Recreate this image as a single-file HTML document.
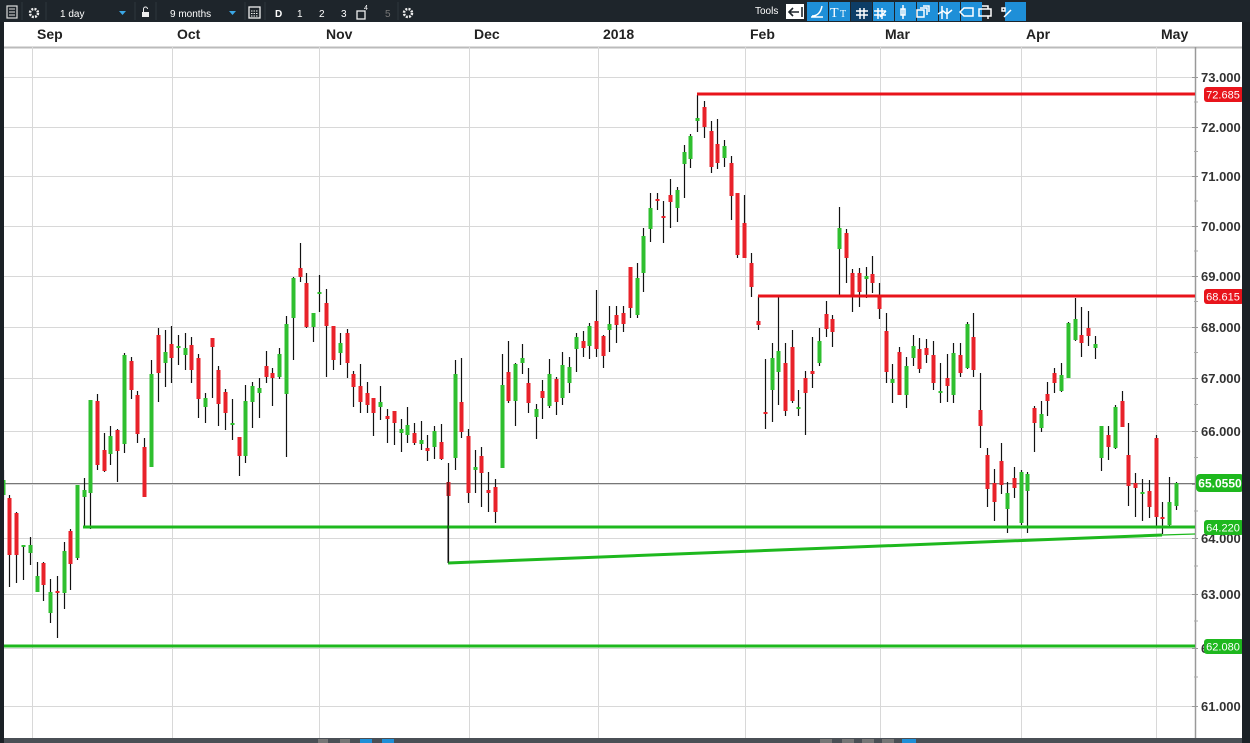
<!DOCTYPE html>
<html><head><meta charset="utf-8"><style>
html,body{margin:0;padding:0;background:#1b2126;overflow:hidden}
svg{display:block;font-family:"Liberation Sans",sans-serif}
</style></head><body>
<svg id="s" width="1250" height="743" viewBox="0 0 1250 743" xmlns="http://www.w3.org/2000/svg">
<rect width="1250" height="743" fill="#1b2126"/>
<rect x="4" y="22" width="1238" height="716" fill="#fff"/>
<rect x="4" y="22" width="1238" height="25" fill="#fff"/>
<line x1="4" y1="47.5" x2="1242" y2="47.5" stroke="#bbb" stroke-width="2"/>
<g fill="#222" font-size="14" font-weight="bold">
<text x="37" y="39">Sep</text><text x="177" y="39">Oct</text><text x="326" y="39">Nov</text>
<text x="474" y="39">Dec</text><text x="603" y="39">2018</text><text x="750" y="39">Feb</text>
<text x="885" y="39">Mar</text><text x="1026" y="39">Apr</text><text x="1161" y="39">May</text>
</g>
<g id="grid" stroke="#d8d8d8" stroke-width="1"></g>
<line x1="1195.5" y1="47" x2="1195.5" y2="738" stroke="#999" stroke-width="1.5"/>
<g id="ax" fill="#333" font-size="13" font-weight="bold"></g>
<line x1="4" y1="483.5" x2="1195" y2="483.5" stroke="#777" stroke-width="1"/>
<g id="c"></g>
<line x1="697" y1="94" x2="1195" y2="94" stroke="#e8141b" stroke-width="3"/>
<line x1="758" y1="296" x2="1195" y2="296" stroke="#e8141b" stroke-width="3"/>
<line x1="83" y1="527" x2="1195" y2="527" stroke="#1eb81e" stroke-width="3"/>
<line x1="4" y1="646" x2="1195" y2="646" stroke="#1eb81e" stroke-width="3"/>
<line x1="448" y1="563" x2="1162" y2="535" stroke="#1eb81e" stroke-width="3"/>
<line x1="1162" y1="535" x2="1195" y2="534" stroke="#1eb81e" stroke-width="1.2"/>
<line x1="448" y1="482" x2="448" y2="563" stroke="#111" stroke-width="1"/>
<g font-size="11" fill="#fff" text-anchor="middle">
<rect x="1204" y="87" width="40" height="15" rx="3" fill="#e8141b"/><text x="1223" y="98.5">72.685</text>
<rect x="1204" y="289" width="40" height="15" rx="3" fill="#e8141b"/><text x="1223" y="300.5">68.615</text>
<rect x="1204" y="520" width="40" height="15" rx="3" fill="#1eb81e"/><text x="1223" y="531.5">64.220</text>
<rect x="1204" y="639" width="40" height="15" rx="3" fill="#1eb81e"/><text x="1223" y="650.5">62.080</text>
<rect x="1196" y="474" width="48" height="18" rx="4" fill="#1eb81e"/><text x="1220" y="487.5" font-weight="bold" font-size="12">65.0550</text>
</g>
<rect x="0" y="0" width="1250" height="22" fill="#1e252b"/>
<rect x="0" y="738" width="1250" height="5" fill="#4a4f55"/>
<rect x="0" y="22" width="4" height="721" fill="#1b2126"/>
<rect x="1242" y="22" width="8" height="721" fill="#1b2126"/>
<g stroke="#2e363d"><line x1="22" y1="2" x2="22" y2="20"/><line x1="46" y1="2" x2="46" y2="20"/><line x1="135" y1="2" x2="135" y2="20"/><line x1="156" y1="2" x2="156" y2="20"/><line x1="245" y1="2" x2="245" y2="20"/><line x1="265" y1="2" x2="265" y2="20"/><line x1="398" y1="2" x2="398" y2="20"/></g>
<g fill="#fff" font-size="10">
<rect x="7" y="6" width="10" height="12" fill="none" stroke="#ddd" stroke-width="1.2"/>
<path d="M9 9h6M9 12h6M9 15h6" stroke="#ddd"/>
<circle cx="34" cy="13" r="4" fill="none" stroke="#eee" stroke-width="2.5" stroke-dasharray="2 1.2"/>
<text x="60" y="17">1 day</text><path d="M119 11h7l-3.5 4z" fill="#3ba7e6"/>
<rect x="142" y="12" width="7" height="5" fill="#eee"/><path d="M143.5 12v-3a2 2 0 0 1 4 0" stroke="#eee" fill="none"/>
<text x="170" y="17">9 months</text><path d="M229 11h7l-3.5 4z" fill="#3ba7e6"/>
<rect x="249" y="7" width="11" height="11" fill="none" stroke="#eee" stroke-width="1.3"/><path d="M251 11h7M251 13.5h7M251 16h7" stroke="#eee" stroke-dasharray="1.5 1"/>
<text x="275" y="17" font-weight="bold">D</text><text x="297" y="17">1</text><text x="319" y="17">2</text><text x="341" y="17">3</text>
<rect x="357" y="11" width="8" height="8" fill="none" stroke="#eee" stroke-width="1.3"/><text x="364" y="10" font-size="7">4</text>
<text x="385" y="17" fill="#777">5</text>
<circle cx="408" cy="13" r="4" fill="none" stroke="#eee" stroke-width="2.5" stroke-dasharray="2 1.2"/>
<text x="755" y="14">Tools</text>
</g>
<g id="tb"></g>
<g fill="#777"><rect x="318" y="739" width="10" height="4"/><rect x="340" y="739" width="10" height="4"/><rect x="360" y="739" width="12" height="4" fill="#1e8fd8"/><rect x="382" y="739" width="12" height="4" fill="#1e8fd8"/><rect x="820" y="739" width="12" height="4"/><rect x="842" y="739" width="12" height="4"/><rect x="862" y="739" width="12" height="4"/><rect x="882" y="739" width="12" height="4"/><rect x="902" y="739" width="14" height="4" fill="#1e8fd8"/></g>
</svg>
<script>
var NS="http://www.w3.org/2000/svg";
function el(p,t,a){var e=document.createElementNS(NS,t);for(var k in a)e.setAttribute(k,a[k]);p.appendChild(e);return e;}
var g=document.getElementById("grid"),ax=document.getElementById("ax");
[32,172,319,469,598,745,880,1021,1156].forEach(function(x){el(g,"line",{x1:x+.5,y1:47,x2:x+.5,y2:738});});
var P=[[73,77],[72,127],[71,176],[70,226],[69,276],[68,327],[67,378],[66,431],[65,484],[64,538],[63,594],[62,648],[61,706]];
P.forEach(function(p,i){el(g,"line",{x1:4,y1:p[1]+.5,x2:1195,y2:p[1]+.5});
var t=el(ax,"text",{x:1201,y:p[1]+5});t.textContent=p[0].toFixed(3);
el(ax,"line",{x1:1192,y1:p[1]+.5,x2:1198,y2:p[1]+.5,stroke:"#999"});
if(i<P.length-1){var m=(p[1]+P[i+1][1])/2;el(ax,"line",{x1:1194,y1:m,x2:1198,y2:m,stroke:"#aaa"});}});
var D=[[3,480,495,470,500,"g"],[9,498,555,495,587,"r"],[16,513,555,512,583,"r"],[23,545,547,545,580,"g"],[30,545,553,537,565,"g"],[37,576,592,562,592,"g"],[43,563,585,562,601,"r"],[50,592,613,579,623,"g"],[57,591,592,576,638,"r"],[64,551,593,542,609,"g"],[70,531,564,529,590,"r"],[77,485,558,485,560,"g"],[84,490,497,478,526,"g"],[90,400,493,400,529,"g"],[97,401,465,394,470,"r"],[104,450,471,433,472,"r"],[110,436,454,426,465,"g"],[117,430,451,429,482,"r"],[124,355,444,353,453,"g"],[131,361,390,357,399,"r"],[137,395,434,391,443,"r"],[144,447,497,438,497,"r"],[151,374,467,360,467,"g"],[158,335,373,328,402,"r"],[165,352,363,330,387,"g"],[171,344,358,326,383,"r"],[178,346,347,335,365,"g"],[185,348,355,333,370,"g"],[191,345,370,337,383,"r"],[198,358,399,354,418,"r"],[205,398,407,393,423,"g"],[212,338,347,338,398,"r"],[218,370,404,366,426,"r"],[225,392,413,389,430,"r"],[232,423,425,399,440,"g"],[239,437,456,437,476,"r"],[245,401,456,385,463,"g"],[252,386,402,382,428,"g"],[259,388,393,378,418,"g"],[266,366,377,351,383,"r"],[272,373,378,368,406,"r"],[279,354,377,348,379,"g"],[286,324,394,316,457,"g"],[293,278,318,277,360,"g"],[300,268,277,243,282,"r"],[306,283,327,273,328,"r"],[313,313,327,313,342,"g"],[319,292,294,275,312,"g"],[326,303,326,289,377,"r"],[333,326,360,326,370,"r"],[340,343,353,333,365,"g"],[347,333,363,329,378,"r"],[353,374,387,371,407,"r"],[360,386,402,364,413,"r"],[367,393,405,382,413,"r"],[373,398,413,398,436,"r"],[380,402,407,386,420,"g"],[387,416,419,409,443,"r"],[394,411,423,411,445,"r"],[401,429,433,419,452,"g"],[407,425,435,407,443,"g"],[414,433,443,423,445,"r"],[421,440,444,421,450,"g"],[427,448,451,435,461,"r"],[434,431,447,426,459,"g"],[441,442,459,424,460,"r"],[448,482,496,463,563,"r"],[455,374,458,360,470,"g"],[461,402,432,358,438,"r"],[468,436,493,429,503,"r"],[475,467,470,450,493,"g"],[481,456,473,447,507,"r"],[488,490,493,472,512,"r"],[495,487,512,479,523,"r"],[502,385,468,354,468,"g"],[508,372,401,341,403,"r"],[515,364,401,363,426,"g"],[522,358,363,344,374,"g"],[528,383,403,368,413,"r"],[536,409,417,404,439,"g"],[542,391,398,380,419,"r"],[549,374,406,359,408,"g"],[556,379,402,377,415,"r"],[562,365,398,352,405,"g"],[569,367,383,357,393,"g"],[576,337,349,333,372,"g"],[583,341,348,331,357,"r"],[589,326,346,323,359,"g"],[596,321,349,290,357,"r"],[603,336,356,335,368,"r"],[609,324,330,306,352,"g"],[616,315,325,306,343,"r"],[623,313,324,306,332,"r"],[630,267,308,267,318,"r"],[637,278,315,263,318,"g"],[643,236,273,228,292,"g"],[650,208,229,193,242,"g"],[657,199,201,193,210,"r"],[663,216,218,201,243,"r"],[670,195,202,179,228,"r"],[677,190,208,187,222,"g"],[684,152,164,145,198,"g"],[690,136,159,134,168,"g"],[697,118,121,95,132,"g"],[704,107,127,101,138,"r"],[711,131,167,121,173,"r"],[717,144,163,119,169,"r"],[724,146,158,140,167,"g"],[731,163,196,156,220,"r"],[737,193,255,193,258,"r"],[744,223,258,195,258,"r"],[751,263,287,253,297,"r"],[758,321,325,296,330,"r"],[765,412,414,359,429,"r"],[772,358,390,343,422,"g"],[778,351,372,295,405,"g"],[785,363,411,343,416,"r"],[792,347,401,330,403,"r"],[798,407,409,390,416,"g"],[805,378,393,371,435,"r"],[812,371,374,337,388,"r"],[819,341,363,328,366,"g"],[826,314,329,301,337,"r"],[832,319,332,315,347,"r"],[839,228,249,207,296,"g"],[846,233,258,229,283,"r"],[852,273,296,269,312,"r"],[859,273,292,268,307,"r"],[866,276,279,267,298,"g"],[872,274,283,256,293,"r"],[879,297,309,283,319,"r"],[886,331,372,313,383,"r"],[892,379,383,364,403,"g"],[899,352,395,347,395,"r"],[906,366,395,357,408,"g"],[913,346,358,335,366,"g"],[919,349,369,338,373,"r"],[926,348,355,339,363,"r"],[933,355,383,341,390,"r"],[940,391,393,363,403,"g"],[947,378,386,354,402,"r"],[953,353,395,343,403,"g"],[960,355,373,343,377,"r"],[967,324,368,322,369,"g"],[973,337,370,313,377,"r"],[980,410,426,373,448,"r"],[987,455,489,448,507,"r"],[994,483,502,469,521,"r"],[1001,461,485,443,494,"r"],[1007,493,509,482,533,"g"],[1014,478,488,467,498,"r"],[1021,472,523,470,525,"g"],[1027,474,491,472,533,"g"],[1034,408,423,406,452,"r"],[1041,414,428,401,432,"g"],[1047,394,401,382,416,"r"],[1054,373,383,368,393,"r"],[1061,375,391,363,392,"g"],[1068,323,378,322,378,"g"],[1075,319,340,298,341,"g"],[1081,335,343,307,357,"r"],[1088,328,336,311,346,"r"],[1095,344,348,336,359,"g"],[1101,426,458,426,471,"g"],[1108,435,447,426,460,"r"],[1115,407,448,405,449,"g"],[1122,401,427,391,427,"r"],[1128,455,486,423,506,"r"],[1135,483,488,473,517,"r"],[1142,492,494,479,521,"g"],[1149,491,507,480,518,"r"],[1156,438,517,435,527,"r"],[1162,517,519,502,534,"r"],[1169,502,525,477,528,"g"],[1176,483,506,482,510,"g"]];
var c=document.getElementById("c");
D.forEach(function(d){var x=d[0]+.5;
el(c,"line",{x1:x,y1:d[3],x2:x,y2:d[4],stroke:"#111","stroke-width":1.2});
var h=Math.max(d[2]-d[1],2);
el(c,"rect",{x:d[0]-1.5,y:d[1],width:4,height:h,fill:d[5]=="g"?"#2fbf2f":"#e8222a"});});
var tb=document.getElementById("tb");
for(var i=0;i<11;i++){var x=785+i*22;var col=i==0?"#fff":(i==3?"#0d3d66":(i==9?"#1e252b":"#1e8fd8"));
if(i==0)continue;el(tb,"rect",{x:x,y:2,width:21,height:19,fill:col});}
el(tb,"rect",{x:786,y:4,width:18,height:15,fill:"#fff"});
el(tb,"path",{d:"M789 12h10M793 8l-4 4 4 4M802 7v10",stroke:"#1e252b","stroke-width":1.6,fill:"none"});
var ic=["M811 17h12M812 16q8 0 10-10","","M860 8v11M864 8v11M856 11h12M856 15h12","M878 8v11M882 8v11M874 11h12M874 15h12M880 17l6-6","M903 5v14M901 9h4v6h-4z","M917 10h7v7h-7zM920 8h7v7M923 6h6v6","M942 6v13M947 8v11M938 14l5-3 4 3 5-4","M960 12l4-4h9v8h-9z","M979 9h12v7h-12zM982 6h6v3M982 16h6v3","M1002 8h3v3h-3zM1004 17l7-7"];
ic.forEach(function(d){if(d)el(tb,"path",{d:d,stroke:"#fff","stroke-width":1.5,fill:"none"});});
var t=el(tb,"text",{x:830,y:17,fill:"#fff","font-size":"14","font-family":"Liberation Serif"});t.textContent="T";
var t2=el(tb,"text",{x:840,y:17,fill:"#fff","font-size":"10","font-family":"Liberation Serif"});t2.textContent="T";
</script>
</body></html>
